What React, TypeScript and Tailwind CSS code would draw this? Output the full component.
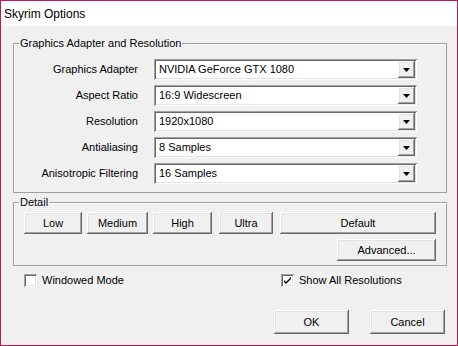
import React from "react";

const font = { fontFamily: '"Liberation Sans", Arial, sans-serif' };

const raised =
  "shadow-[inset_-1px_-1px_0_#696969,inset_1px_1px_0_#ffffff,inset_-2px_-2px_0_#a0a0a0,inset_2px_2px_0_#e3e3e3]";
const sunken =
  "shadow-[inset_1px_1px_0_#a0a0a0,inset_-1px_-1px_0_#ffffff,inset_2px_2px_0_#696969,inset_-2px_-2px_0_#e3e3e3]";

const rows = [
  { label: "Graphics Adapter", value: "NVIDIA GeForce GTX 1080" },
  { label: "Aspect Ratio", value: "16:9 Widescreen" },
  { label: "Resolution", value: "1920x1080" },
  { label: "Antialiasing", value: "8 Samples" },
  { label: "Anisotropic Filtering", value: "16 Samples" },
];

export default function App() {
  return (
    <div
      className="w-[458px] h-[346px] border border-[#c2185b] bg-[#f0f0f0] text-[11px] text-black flex flex-col"
      style={font}
    >
      <div className="h-[25px] bg-white flex items-center pl-[3px] text-[12px] leading-none">
        Skyrim Options
      </div>

      <div className="flex-1 px-[12px] pt-[11px]">
        <fieldset className="border border-[#a0a0a0] w-[434px] pb-[8px] pt-[9px] shadow-[inset_1px_1px_0_#fff]">
          <legend className="ml-[5px] px-[1px] leading-[13px]">Graphics Adapter and Resolution</legend>
          <div className="flex flex-col gap-[5px]">
            {rows.map((r) => (
              <div key={r.label} className="flex items-center h-[21px]">
                <div className="w-[124px] text-right">{r.label}</div>
                <Dropdown value={r.value} />
              </div>
            ))}
          </div>
        </fieldset>

        <fieldset className="mt-[3px] border border-[#a0a0a0] w-[434px] pb-[4px] pt-[3px] shadow-[inset_1px_1px_0_#fff]">
          <legend className="ml-[5px] px-[1px] leading-[13px]">Detail</legend>
          <div className="flex pl-[10px]">
            <Button label="Low" w="w-[58px]" />
            <Button label="Medium" w="w-[61px] ml-[5px]" />
            <Button label="High" w="w-[59px] ml-[5px]" />
            <Button label="Ultra" w="w-[54px] ml-[7px]" />
            <Button label="Default" w="w-[156px] ml-[7px]" />
          </div>
          <div className="flex justify-end pr-[10px] mt-[5px]">
            <Button label="Advanced..." w="w-[99px]" />
          </div>
        </fieldset>

        <div className="flex items-center mt-[8px] h-[13px]">
          <div className="w-[268px] pl-[11px] flex items-center">
            <Check />
            <span className="ml-[5px]">Windowed Mode</span>
          </div>
          <div className="flex items-center">
            <Check checked />
            <span className="ml-[5px]">Show All Resolutions</span>
          </div>
        </div>

        <div className="flex justify-end gap-[21px] mt-[23px]">
          <Button label="OK" w="w-[75px] h-[24px]" />
          <Button label="Cancel" w="w-[75px] h-[24px]" />
        </div>
      </div>
    </div>
  );
}

function Dropdown({ value }: { value: string }) {
  return (
    <div className={`ml-[16px] w-[263px] h-[21px] bg-white flex items-center p-[2px] ${sunken}`}>
      <div className="flex-1 pl-[3px]">{value}</div>
      <div className={`w-[17px] h-[17px] bg-[#f0f0f0] flex items-center justify-center ${raised}`}>
        <svg width="7" height="4" viewBox="0 0 7 4">
          <polygon points="0,0 7,0 3.5,4" fill="#000" />
        </svg>
      </div>
    </div>
  );
}

function Button({ label, w }: { label: string; w: string }) {
  return (
    <div className={`h-[22px] flex items-center justify-center bg-[#f0f0f0] ${w} ${raised}`}>
      {label}
    </div>
  );
}

function Check({ checked }: { checked?: boolean }) {
  return (
    <div className={`w-[13px] h-[13px] bg-white flex items-center justify-center ${sunken}`}>
      {checked && (
        <svg width="7" height="7" viewBox="0 0 7 7">
          <path d="M0 3 L2 5 L7 0 L7 2 L2 7 L0 5 Z" fill="#000" />
        </svg>
      )}
    </div>
  );
}
